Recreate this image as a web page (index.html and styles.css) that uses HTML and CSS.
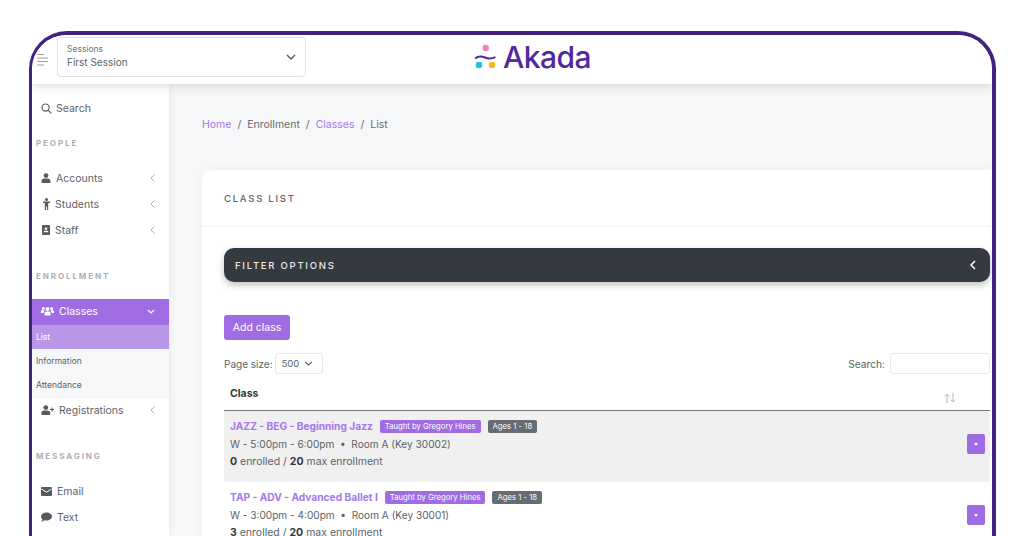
FILE: index.html
```html
<!DOCTYPE html>
<html lang="en">

<head>
    <meta charset="UTF-8">
    <meta name="viewport" content="width=device-width, initial-scale=1.0">
    <title>Akada - Class List</title>
    <link rel="stylesheet" href="styles.css">
</head>

<body>
    <div class="frame">
        <header class="topbar">
            <svg class="hamburger" width="12" height="14" viewBox="0 0 12 14">
                <path d="M1 1.500h7M1 5h11M1 8.500h11M1 12h7" stroke="#9a9fa5" stroke-width="1" fill="none" />
            </svg>
            <div class="session-select">
                <div>
                    <div class="session-label">Sessions</div>
                    <div class="session-value">First Session</div>
                </div>
                <svg width="10" height="6" viewBox="0 0 10 6">
                    <path d="M1 1l4 4 4-4" stroke="#555b62" stroke-width="1.400" fill="none" />
                </svg>
            </div>
            <div class="logo">
                <svg width="24" height="26" viewBox="0 0 24 26">
                    <circle cx="11.700" cy="4" r="3.200" fill="#f47fc4" />
                    <path d="M1 14.500c3.500-2.800 6.500-2.500 10-1s7 1.500 10.500-.5" stroke="#4f2a9e" stroke-width="2" fill="none" />
                    <circle cx="5" cy="21" r="3.300" fill="#22c3d6" />
                    <circle cx="18" cy="21" r="3.300" fill="#f6b822" />
                </svg>
                <span class="logo-text">Akada</span>
            </div>
        </header>

        <div class="layout">
            <aside class="sidebar">
                <div class="nav-item search-item">
                    <svg class="nav-icon" width="11" height="11" viewBox="0 0 12 12">
                        <circle cx="5" cy="5" r="3.900" stroke="#555b62" stroke-width="1.300" fill="none" />
                        <path d="M8 8l3.300 3.300" stroke="#555b62" stroke-width="1.400" />
                    </svg>
                    <span>Search</span>
                </div>

                <div class="nav-heading people">PEOPLE</div>
                <div class="nav-item">
                    <svg class="nav-icon" width="10" height="10" viewBox="0 0 10 10">
                        <circle cx="5" cy="2.600" r="2.400" fill="#555b62" />
                        <path d="M.6 10V8c0-1.600 1.200-2.500 2.600-2.500h3.600c1.400 0 2.600.9 2.600 2.500v2z" fill="#555b62" />
                    </svg>
                    <span>Accounts</span>
                    <svg class="caret" width="5" height="8" viewBox="0 0 5 8">
                        <path d="M4.500.5L1 4l3.500 3.500" stroke="#a8acb1" stroke-width="1" fill="none" />
                    </svg>
                </div>
                <div class="nav-item">
                    <svg class="nav-icon narrow" width="7" height="12" viewBox="0 0 7 12">
                        <circle cx="3.500" cy="1.500" r="1.500" fill="#555b62" />
                        <path d="M0 3.500h7v1.400H5.200V12H4V8.500H3V12H1.800V4.900H0z" fill="#555b62" />
                    </svg>
                    <span>Students</span>
                    <svg class="caret" width="5" height="8" viewBox="0 0 5 8">
                        <path d="M4.500.5L1 4l3.500 3.500" stroke="#a8acb1" stroke-width="1" fill="none" />
                    </svg>
                </div>
                <div class="nav-item">
                    <svg class="nav-icon slim" width="8" height="10" viewBox="0 0 8 10">
                        <rect width="8" height="10" rx="1" fill="#555b62" />
                        <circle cx="4" cy="3.700" r="1.300" fill="#fff" />
                        <rect x="1.800" y="5.800" width="4.400" height="1.400" fill="#fff" />
                    </svg>
                    <span>Staff</span>
                    <svg class="caret" width="5" height="8" viewBox="0 0 5 8">
                        <path d="M4.500.5L1 4l3.500 3.500" stroke="#a8acb1" stroke-width="1" fill="none" />
                    </svg>
                </div>

                <div class="nav-heading enrollment">ENROLLMENT</div>
                <div class="nav-item active">
                    <svg class="nav-icon" width="13" height="10" viewBox="0 0 13 10">
                        <circle cx="6.500" cy="3" r="2" fill="#fff" />
                        <circle cx="2.300" cy="2.600" r="1.500" fill="#fff" />
                        <circle cx="10.700" cy="2.600" r="1.500" fill="#fff" />
                        <path d="M3.500 9.500V7.200c0-1.200.8-1.800 1.700-1.800h2.600c.9 0 1.700.6 1.700 1.800v2.300zM0 7V5.600c0-.8.600-1.300 1.300-1.300h1.500c.4 0 .7.200 1 .5-.8.400-1.200 1.200-1.300 2.200zM13 7V5.600c0-.8-.6-1.300-1.300-1.300h-1.500c-.4 0-.7.200-1 .5.800.4 1.200 1.200 1.300 2.200z" fill="#fff" />
                    </svg>
                    <span>Classes</span>
                    <svg class="caret" width="8" height="5" viewBox="0 0 8 5">
                        <path d="M.8.800L4 4l3.200-3.200" stroke="#fff" stroke-width="1.200" fill="none" />
                    </svg>
                </div>
                <div class="subnav">
                    <div class="subnav-item current">List</div>
                    <div class="subnav-item">Information</div>
                    <div class="subnav-item">Attendance</div>
                </div>
                <div class="nav-item">
                    <svg class="nav-icon" width="13" height="10" viewBox="0 0 13 10">
                        <circle cx="4.800" cy="2.600" r="2.400" fill="#555b62" />
                        <path d="M.4 10V8c0-1.600 1.200-2.500 2.600-2.500h3.600C8 5.500 9.200 6.400 9.200 8v2zM10.500 2.500h1v1.500H13v1h-1.500v1.500h-1V5H9V4h1.500z" fill="#555b62" />
                    </svg>
                    <span>Registrations</span>
                    <svg class="caret" width="5" height="8" viewBox="0 0 5 8">
                        <path d="M4.500.5L1 4l3.500 3.500" stroke="#a8acb1" stroke-width="1" fill="none" />
                    </svg>
                </div>

                <div class="nav-heading messaging">MESSAGING</div>
                <div class="nav-item">
                    <svg class="nav-icon mini" width="11" height="9" viewBox="0 0 11 9">
                        <rect width="11" height="9" rx="1" fill="#555b62" />
                        <path d="M.5 2l5 3.200 5-3.200" stroke="#fff" stroke-width="1" fill="none" />
                    </svg>
                    <span>Email</span>
                </div>
                <div class="nav-item">
                    <svg class="nav-icon mini" width="11" height="10" viewBox="0 0 11 10">
                        <path d="M5.500.5C8.500.5 11 2.200 11 4.500S8.500 8.500 5.500 8.500c-.8 0-1.500-.1-2.200-.3C2.500 9 1.400 9.500.3 9.500c.6-.6 1-1.400 1.100-2.200C.5 6.500 0 5.600 0 4.500 0 2.200 2.500.5 5.500.5z" fill="#555b62" />
                    </svg>
                    <span>Text</span>
                </div>
            </aside>

            <main class="main">
                <nav class="breadcrumb">
                    <a class="crumb-link">Home</a>
                    <span class="crumb-sep">/</span>
                    <span>Enrollment</span>
                    <span class="crumb-sep">/</span>
                    <a class="crumb-link">Classes</a>
                    <span class="crumb-sep">/</span>
                    <span>List</span>
                </nav>

                <section class="card">
                    <div class="card-header">CLASS LIST</div>
                    <div class="card-body">
                        <div class="filter-bar">
                            <span>FILTER OPTIONS</span>
                            <svg width="6" height="10" viewBox="0 0 6 10">
                                <path d="M5 1L1 5l4 4" stroke="#fff" stroke-width="1.500" fill="none" />
                            </svg>
                        </div>

                        <button class="add-btn">Add class</button>

                        <div class="table-controls">
                            <div class="page-size">
                                <span>Page size:</span>
                                <div class="page-select">
                                    <span>500</span>
                                    <svg width="9" height="5" viewBox="0 0 9 5">
                                        <path d="M1 .8l3.500 3.200L8 .8" stroke="#555b62" stroke-width="1.100" fill="none" />
                                    </svg>
                                </div>
                            </div>
                            <div class="table-search">
                                <span>Search:</span>
                                <div class="search-box"></div>
                            </div>
                        </div>

                        <div class="table-head">
                            <span>Class</span>
                            <svg width="12" height="10" viewBox="0 0 12 10">
                                <path d="M3 10V1M.6 3.400L3 1l2.400 2.400M9 0v9M6.600 6.600L9 9l2.400-2.400" stroke="#b4b7bb" stroke-width="1" fill="none" />
                            </svg>
                        </div>

                        <div class="class-row shaded">
                            <div class="class-info">
                                <div class="class-title">
                                    <a class="class-name">JAZZ - BEG - Beginning Jazz</a>
                                    <span class="badge teacher">Taught by Gregory Hines</span>
                                    <span class="badge ages">Ages 1 - 18</span>
                                </div>
                                <div class="class-line schedule">W - 5:00pm - 6:00pm &nbsp;•&nbsp; Room A (Key 30002)</div>
                                <div class="class-line"><b>0</b> enrolled / <b>20</b> max enrollment</div>
                            </div>
                            <button class="row-btn"><span class="row-caret"></span></button>
                        </div>

                        <div class="class-row">
                            <div class="class-info">
                                <div class="class-title">
                                    <a class="class-name">TAP - ADV - Advanced Ballet I</a>
                                    <span class="badge teacher">Taught by Gregory Hines</span>
                                    <span class="badge ages">Ages 1 - 18</span>
                                </div>
                                <div class="class-line schedule">W - 3:00pm - 4:00pm &nbsp;•&nbsp; Room A (Key 30001)</div>
                                <div class="class-line"><b>3</b> enrolled / <b>20</b> max enrollment</div>
                            </div>
                            <button class="row-btn"><span class="row-caret"></span></button>
                        </div>
                    </div>
                </section>
            </main>
        </div>
    </div>
</body>

</html>
```

FILE: styles.css
```css
html,
body {
    height: 536px;
    overflow: hidden;
}

body {
    font-family: 'Inter', 'Liberation Sans', sans-serif;
    background-color: #fff;
    margin: 0;
    padding: 0;
    color: #5c6268;
}

.frame {
    width: 967px;
    height: 505px;
    box-sizing: border-box;
    margin: 31px 0 0 29px;
    border: 4px solid #42237f;
    border-left-width: 3px;
    border-bottom: none;
    border-radius: 38px 38px 0 0;
    overflow: hidden;
    background-color: #f6f7f9;
    display: flex;
    flex-direction: column;
}

/* top bar */
.topbar {
    height: 49px;
    flex: none;
    background-color: #fff;
    box-shadow: 0 2px 10px rgba(60, 70, 70, 0.18);
    display: flex;
    align-items: center;
    position: relative;
    z-index: 2;
    padding-left: 4px;
}

.hamburger {
    margin-right: 9px;
}

.session-select {
    width: 249px;
    height: 40px;
    box-sizing: border-box;
    margin-top: -6px;
    border: 1px solid #dfe1e6;
    border-radius: 4px;
    padding: 0 9px;
    display: flex;
    align-items: center;
    justify-content: space-between;
}

.session-label {
    font-size: 8.500px;
    color: #70767c;
    line-height: 12px;
}

.session-value {
    font-size: 10px;
    line-height: 15px;
}

.logo {
    margin-left: 168px;
    margin-top: -6px;
    display: flex;
    align-items: center;
    gap: 5px;
}

.logo-text {
    font-size: 30px;
    font-weight: 500;
    letter-spacing: -0.5px;
    color: #4f2a9e;
}

/* sidebar */
.layout {
    flex: 1;
    display: flex;
    min-height: 0;
}

.sidebar {
    width: 137px;
    flex: none;
    background-color: #fff;
    box-shadow: 1px 0 6px rgba(60, 70, 70, 0.08);
    position: relative;
    z-index: 1;
    padding-top: 11px;
    font-size: 10.500px;
}

.nav-item {
    height: 26px;
    box-sizing: border-box;
    display: flex;
    align-items: center;
    padding: 0 14px 0 9px;
}

.nav-icon {
    margin-right: 5px;
    flex: none;
}

.nav-icon.narrow {
    margin-left: 2px;
}

.nav-icon.slim {
    margin-left: 1px;
    margin-right: 5px;
}

.search-item .nav-icon {
    margin-right: 4px;
}

.caret {
    margin-left: auto;
}

.nav-heading {
    font-size: 8px;
    font-weight: 700;
    letter-spacing: 1.900px;
    color: #aab0b6;
    padding-left: 4px;
    line-height: 10px;
}

.people {
    margin: 17px 0 17px;
}

.enrollment {
    margin: 28px 0 18px;
}

.messaging {
    margin: 28px 0 17px;
}

.active {
    background-color: #9f6ce3;
    color: #fff;
    padding-bottom: 2px;
}

.subnav {
    background-color: #f6f7f9;
    font-size: 8.500px;
    box-shadow: 0 1px 2px rgba(0, 0, 0, 0.06);
}

.subnav-item {
    height: 24px;
    line-height: 24px;
    padding-left: 4px;
}

.subnav-item.current {
    background-color: #b897e9;
    color: #fff;
}

/* main content */
.main {
    flex: 1;
    min-width: 0;
    padding: 35px 0 0 33px;
    font-size: 10.500px;
}

.breadcrumb {
    display: flex;
    gap: 6px;
    line-height: 12px;
    color: #666c72;
}

.crumb-link {
    color: #a678ea;
}

.card {
    margin-top: 39px;
    background-color: #fff;
    border-radius: 10px 0 0 0;
    box-shadow: 0 0 12px rgba(60, 70, 90, 0.05);
}

.card-header {
    height: 57px;
    line-height: 57px;
    box-sizing: border-box;
    padding-left: 22px;
    border-bottom: 1px solid #f2f3f5;
    font-size: 9.500px;
    font-weight: 500;
    letter-spacing: 1.750px;
}

.card-body {
    padding: 21px 2px 0 22px;
}

.filter-bar {
    height: 34px;
    border-radius: 10px;
    background-color: #343a40;
    box-shadow: 0 3px 7px rgba(0, 0, 0, 0.25);
    color: #e8e9ea;
    font-size: 9.500px;
    font-weight: 500;
    letter-spacing: 1.750px;
    display: flex;
    align-items: center;
    justify-content: space-between;
    padding: 0 14px 0 11px;
}

.add-btn {
    display: block;
    margin-top: 33px;
    width: 66px;
    height: 25px;
    padding: 0;
    border: none;
    border-radius: 3px;
    background-color: #9f6ce3;
    color: #fff;
    font-family: inherit;
    font-size: 10.500px;
}

.table-controls {
    margin-top: 13px;
    display: flex;
    justify-content: space-between;
    align-items: center;
}

.page-size,
.table-search {
    display: flex;
    align-items: center;
    gap: 2px;
}

.page-size {
    font-size: 10px;
}

.table-search {
    font-size: 10.200px;
    gap: 5px;
}

.page-select {
    width: 48px;
    height: 21px;
    box-sizing: border-box;
    border: 1px solid #e6e8ec;
    border-radius: 3px;
    display: flex;
    align-items: center;
    justify-content: space-between;
    padding: 0 9px 0 6px;
    font-size: 9.500px;
}

.search-box {
    width: 100px;
    height: 21px;
    box-sizing: border-box;
    border: 1px solid #e6e8ec;
    border-radius: 3px;
}

.table-head {
    margin-top: 8px;
    height: 28px;
    padding: 0 34px 0 6px;
    display: flex;
    align-items: center;
    justify-content: space-between;
    border-bottom: 1px solid #77797c;
    font-weight: 700;
    color: #33383d;
}

.table-head span {
    margin-top: -6px;
}

.table-head svg {
    margin-top: 3px;
}

.class-row {
    height: 71px;
    box-sizing: border-box;
    padding: 6px 5px 0 6px;
    display: flex;
    justify-content: space-between;
}

.shaded {
    background-color: #f0f0f0;
}

.class-title {
    display: flex;
    align-items: center;
    gap: 7px;
    height: 18px;
}

.class-name {
    font-size: 10.200px;
    font-weight: 700;
    color: #a678ea;
}

.badge {
    font-size: 7.700px;
    height: 13px;
    line-height: 13px;
    padding: 0 5px;
    border-radius: 2px;
    color: #fff;
}

.teacher {
    background-color: #9f6ce3;
}

.ages {
    background-color: #666c73;
}

.class-line {
    line-height: 18px;
}

.schedule {
    font-size: 10.100px;
}

.class-line b {
    color: #33383d;
}

.row-btn {
    width: 18px;
    height: 20px;
    padding: 0;
    margin-top: 17px;
    border: none;
    border-radius: 2px;
    background-color: #9f6ce3;
    display: flex;
    align-items: center;
    justify-content: center;
}

.row-caret {
    width: 0;
    height: 0;
    border-left: 2.500px solid transparent;
    border-right: 2.500px solid transparent;
    border-top: 3px solid #fff;
}
```
